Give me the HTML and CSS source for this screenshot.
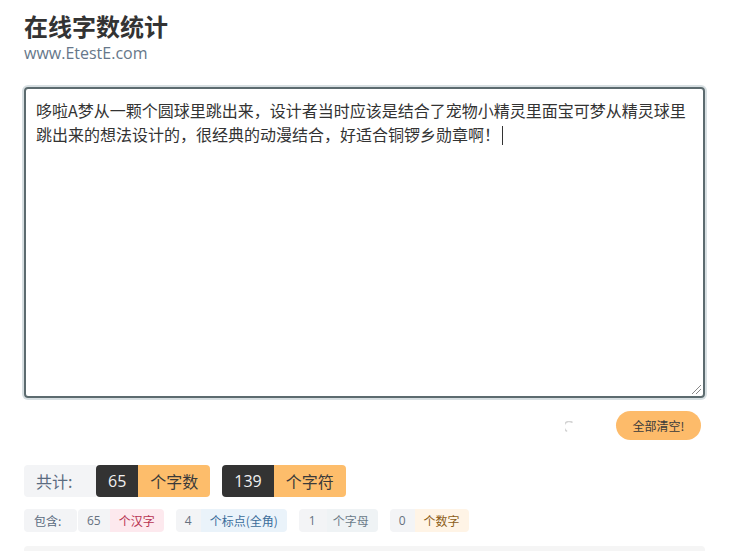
FILE: index.html
```html
<!DOCTYPE html>
<html lang="zh-CN">
<head>
<meta charset="utf-8">
<title>在线字数统计</title>
<link rel="stylesheet" href="styles.css">
</head>
<body>
<div class="page">
  <header class="head">
    <h1 class="title">在线字数统计</h1>
    <div class="site">www.EtestE.com</div>
  </header>
  <div class="editor">哆啦A梦从一颗个圆球里跳出来，设计者当时应该是结合了宠物小精灵里面宝可梦从精灵球里跳出来的想法设计的，很经典的动漫结合，好适合铜锣乡勋章啊！<span class="caret"></span></div>
  <div class="actions">
    <svg class="spinner" width="12" height="12" viewBox="0 0 12 12"><path d="M1.5 10 A5 5 0 0 1 7 1.2" fill="none" stroke="#d4d4d4" stroke-width="1.6" stroke-linecap="round"/></svg>
    <button class="clear">全部清空!</button>
  </div>
  <div class="totals">
    <span class="t-label">共计:</span>
    <span class="t-group"><span class="t-num">65</span><span class="t-unit">个字数</span></span>
    <span class="t-group"><span class="t-num">139</span><span class="t-unit">个字符</span></span>
  </div>
  <div class="detail">
    <span class="d-label">包含:</span>
    <span class="d-group"><span class="d-num">65</span><span class="d-unit pink">个汉字</span></span>
    <span class="d-group"><span class="d-num">4</span><span class="d-unit blue">个标点(全角)</span></span>
    <span class="d-group"><span class="d-num wide">1</span><span class="d-unit grey">个字母</span></span>
    <span class="d-group"><span class="d-num">0</span><span class="d-unit amber">个数字</span></span>
  </div>
  <div class="more"></div>
</div>
</body>
</html>
```
FILE: styles.css
```css
html, body {
  margin: 0;
  padding: 0;
  background: #fff;
}
body {
  font-family: "Noto Sans CJK SC", "Open Sans", sans-serif;
  color: #333;
  overflow: hidden;
}
.page {
  width: 681px;
  padding: 0 24px;
}
.head {
  padding-top: 9px;
}
.title {
  margin: 0;
  font-size: 24px;
  line-height: 34px;
  font-weight: 700;
  color: #333;
}
.site {
  font-family: "Open Sans", sans-serif;
  font-size: 16px;
  line-height: 20px;
  color: #66778a;
}
.editor {
  margin-top: 24px;
  box-sizing: border-box;
  height: 311px;
  border: 2px solid #5c6b6f;
  border-radius: 4px;
  box-shadow: 0 0 0 2px #d7dfe2;
  padding: 9px 10px;
  font-size: 16px;
  line-height: 24px;
  color: #333;
  position: relative;
}
.editor::after {
  content: "";
  position: absolute;
  right: 2px;
  bottom: 2px;
  width: 9px;
  height: 9px;
  background: linear-gradient(135deg, transparent 45%, #888 45%, #888 52%, transparent 52%, transparent 70%, #888 70%, #888 77%, transparent 77%);
}
.caret {
  display: inline-block;
  width: 1px;
  height: 19px;
  background: #333;
  vertical-align: -4px;
  margin-left: 2px;
}
.actions {
  display: flex;
  justify-content: flex-end;
  align-items: center;
  gap: 39px;
  margin-top: 13px;
  padding-right: 4px;
}
.spinner {
  display: block;
  margin-top: 2px;
}
.clear {
  font-family: "Noto Sans CJK SC", sans-serif;
  font-size: 12px;
  color: #3a3a3a;
  background: #fdbb6a;
  border: none;
  border-radius: 15px;
  width: 85px;
  height: 29px;
  padding: 0;
}
.totals {
  display: flex;
  align-items: stretch;
  margin-top: 25px;
  height: 32px;
  font-size: 16px;
}
.t-label {
  display: flex;
  align-items: center;
  width: 72px;
  box-sizing: border-box;
  padding-left: 12px;
  background: #f3f4f6;
  color: #5a6b80;
  border-radius: 4px 0 0 4px;
}
.t-group {
  display: flex;
  margin-right: 12px;
}
.t-num {
  display: flex;
  align-items: center;
  padding: 0 12px;
  background: #333;
  color: #f1f1f1;
  border-radius: 4px 0 0 4px;
  font-family: "Open Sans", sans-serif;
}
.t-unit {
  display: flex;
  align-items: center;
  padding: 0 12px;
  background: #fdbd6b;
  color: #3a3a3a;
  border-radius: 0 4px 4px 0;
}
.detail {
  display: flex;
  margin-top: 12px;
  height: 23px;
  font-size: 12px;
}
.d-label {
  display: flex;
  align-items: center;
  width: 53px;
  box-sizing: border-box;
  padding-left: 10px;
  background: #f3f4f6;
  color: #5a6b80;
  border-radius: 4px;
  margin-right: 1px;
}
.d-group {
  display: flex;
  margin-right: 12px;
  border-radius: 4px;
  overflow: hidden;
}
.d-num {
  display: flex;
  align-items: center;
  padding: 0 9px;
  background: #f3f4f6;
  color: #66717f;
  font-family: "Open Sans", sans-serif;
}
.d-num.wide {
  padding: 0 11px 0 10px;
}
.d-unit {
  display: flex;
  align-items: center;
  padding: 0 9px;
}
.pink { background: #fde9ee; color: #b83452; }
.blue { background: #eaf3fa; color: #3a6d9b; }
.grey { background: #eff3f5; color: #6b7b89; padding: 0 9px 0 6px; }
.amber { background: #fff4e6; color: #8d5d17; }
.more {
  margin-top: 14px;
  height: 40px;
  background: #f5f5f5;
  border-radius: 4px 4px 0 0;
}
```
